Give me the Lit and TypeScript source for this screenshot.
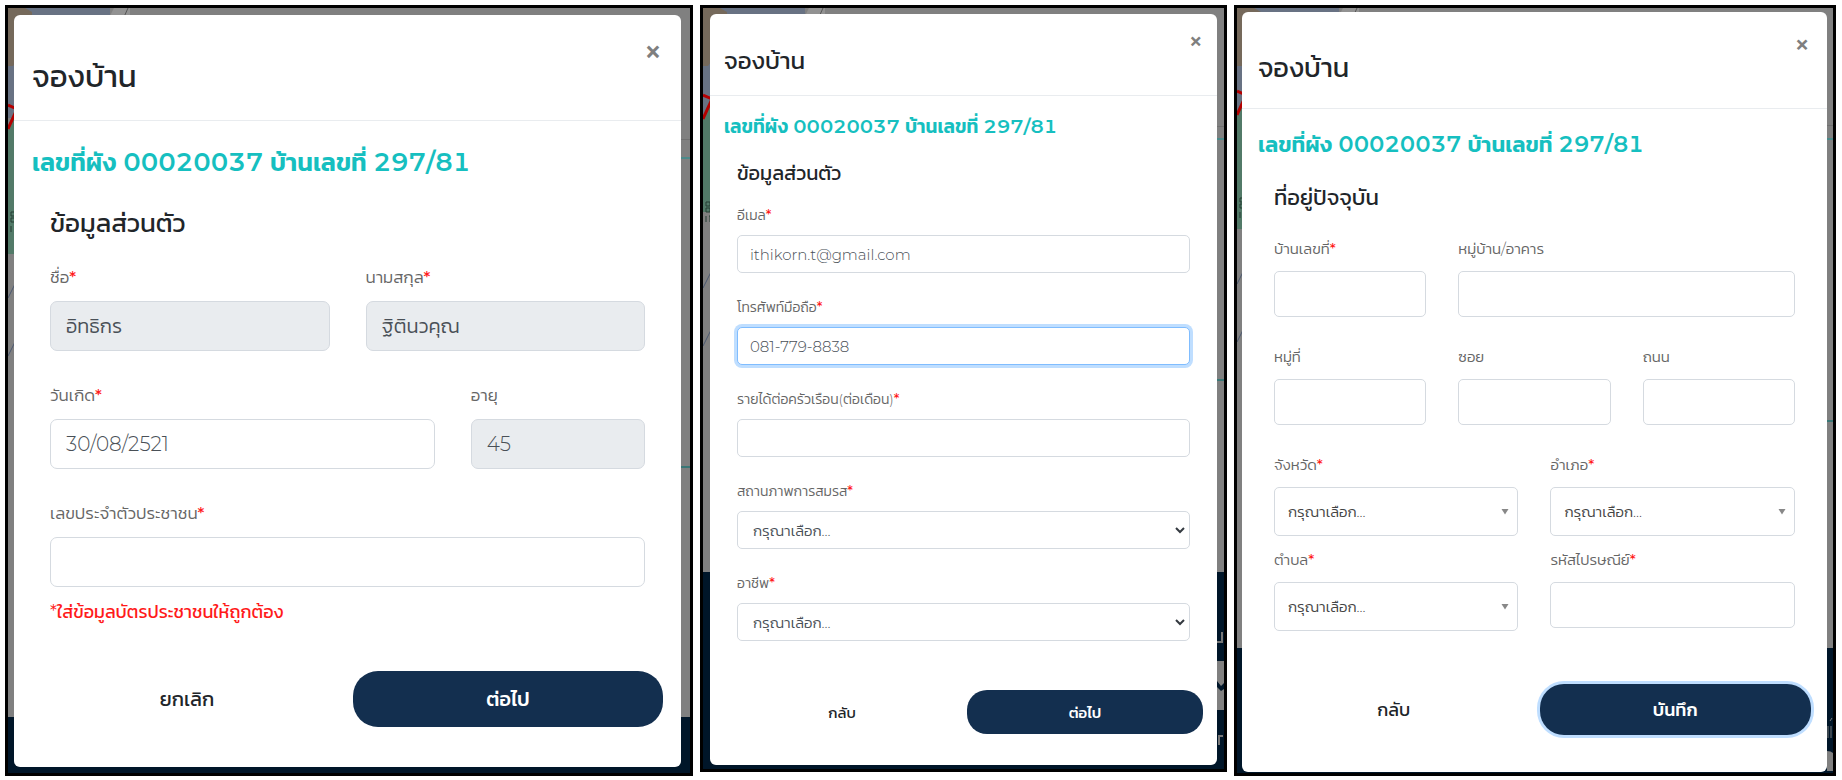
import { LitElement, html, css, svg, nothing } from "lit";
import { customElement, property } from "lit/decorators.js";

interface Field {
  id: string;
  label: string;
  span: number;
  kind?: "text" | "native" | "picker";
  value?: string;
  required?: boolean;
  disabled?: boolean;
  focused?: boolean;
  note?: string;
}

interface Step {
  size: "large" | "small" | "medium";
  heading: string;
  back: string;
  next: string;
  ring?: boolean;
  fields: Field[];
}

const CHOOSE = "กรุณาเลือก...";

const STEPS: Step[] = [
  {
    size: "large",
    heading: "ข้อมูลส่วนตัว",
    back: "ยกเลิก",
    next: "ต่อไป",
    fields: [
      { id: "first-name", label: "ชื่อ", span: 6, value: "อิทธิกร", required: true, disabled: true },
      { id: "last-name", label: "นามสกุล", span: 6, value: "ฐิตินวคุณ", required: true, disabled: true },
      { id: "birth", label: "วันเกิด", span: 8, value: "30/08/2521", required: true },
      { id: "age", label: "อายุ", span: 4, value: "45", disabled: true },
      { id: "citizen", label: "เลขประจำตัวประชาชน", span: 12, required: true, note: "*ใส่ข้อมูลบัตรประชาชนให้ถูกต้อง" },
    ],
  },
  {
    size: "small",
    heading: "ข้อมูลส่วนตัว",
    back: "กลับ",
    next: "ต่อไป",
    fields: [
      { id: "email", label: "อีเมล", span: 12, value: "ithikorn.t@gmail.com", required: true },
      { id: "phone", label: "โทรศัพท์มือถือ", span: 12, value: "081-779-8838", required: true, focused: true },
      { id: "income", label: "รายได้ต่อครัวเรือน(ต่อเดือน)", span: 12, required: true },
      { id: "marital", label: "สถานภาพการสมรส", span: 12, kind: "native", required: true },
      { id: "job", label: "อาชีพ", span: 12, kind: "native", required: true },
    ],
  },
  {
    size: "medium",
    heading: "ที่อยู่ปัจจุบัน",
    back: "กลับ",
    next: "บันทึก",
    ring: true,
    fields: [
      { id: "house-no", label: "บ้านเลขที่", span: 4, required: true },
      { id: "village", label: "หมู่บ้าน/อาคาร", span: 8 },
      { id: "moo", label: "หมู่ที่", span: 4 },
      { id: "soi", label: "ซอย", span: 4 },
      { id: "road", label: "ถนน", span: 4 },
      { id: "province", label: "จังหวัด", span: 6, kind: "picker", required: true },
      { id: "district", label: "อำเภอ", span: 6, kind: "picker", required: true },
      { id: "subdistrict", label: "ตำบล", span: 6, kind: "picker", required: true },
      { id: "postcode", label: "รหัสไปรษณีย์", span: 6, required: true },
    ],
  },
];

@customElement("booking-step")
export class BookingStep extends LitElement {
  @property({ attribute: false }) step!: Step;

  static styles = css`
    :host {
      display: block;
      min-width: 0;
    }
    * {
      box-sizing: border-box;
    }
    .frame {
      position: relative;
      border: 3px solid #000;
      background: #808080;
      overflow: hidden;
    }
    .large {
      padding: 7px 9px 6px 6px;
      --edge: 18px;
      --inset: 36px;
      --gap: 36px;
      --head: 106px;
      --head-top: 16px;
      --title: 31px;
      --teal: 25px;
      --teal-line: 40px;
      --teal-top: 21px;
      --heading: 26px;
      --heading-line: 36px;
      --heading-top: 23px;
      --heading-bottom: 24px;
      --label: 17px;
      --label-line: 24px;
      --label-bottom: 12px;
      --row: 32px;
      --control: 50px;
      --text: 20px;
      --pad: 15px;
      --radius: 7px;
      --actions-top: 45px;
      --button: 56px;
      --button-text: 20px;
      --actions-bottom: 40px;
      --actions-gap: 11px;
      --pill: 25px;
      --close: 28px;
      --close-top: 22px;
      --close-right: 20px;
      --footer: 56px;
    }
    .small {
      padding: 6px 7px 4px;
      --edge: 14px;
      --inset: 27px;
      --gap: 30px;
      --head: 82px;
      --head-top: 12px;
      --title: 24px;
      --teal: 19px;
      --teal-line: 30px;
      --teal-top: 16px;
      --heading: 20px;
      --heading-line: 28px;
      --heading-top: 17px;
      --heading-bottom: 19px;
      --label: 14px;
      --label-line: 18px;
      --label-bottom: 11px;
      --row: 25px;
      --control: 38px;
      --text: 15px;
      --pad: 12px;
      --radius: 5px;
      --actions-top: 49px;
      --button: 44px;
      --button-text: 15px;
      --actions-bottom: 31px;
      --actions-gap: 7px;
      --pill: 20px;
      --close: 22px;
      --close-top: 15px;
      --close-right: 15px;
      --footer: 197px;
    }
    .medium {
      padding: 4px 6px 1px 5px;
      --edge: 16px;
      --inset: 32px;
      --gap: 32px;
      --head: 97px;
      --head-top: 14px;
      --title: 27px;
      --teal: 22px;
      --teal-line: 34px;
      --teal-top: 19px;
      --heading: 22px;
      --heading-line: 32px;
      --heading-top: 20px;
      --heading-bottom: 24px;
      --label: 15px;
      --label-line: 22px;
      --label-bottom: 11px;
      --row: 29px;
      --control: 46px;
      --text: 15px;
      --pad: 13px;
      --radius: 5px;
      --actions-top: 56px;
      --button: 51px;
      --button-text: 18px;
      --actions-bottom: 37px;
      --actions-gap: 10px;
      --pill: 24px;
      --close: 24px;
      --close-top: 20px;
      --close-right: 18px;
      --footer: 125px;
    }
    .footer {
      position: absolute;
      left: 0;
      right: 0;
      bottom: 0;
      height: var(--footer);
      background: #001629;
    }
    .map {
      position: absolute;
      top: 0;
    }
    .map.start {
      left: 0;
    }
    .map.end {
      right: 0;
    }
    .modal {
      position: relative;
      background: #fff;
      border-radius: 6px;
    }
    .head {
      display: flex;
      align-items: center;
      height: var(--head);
      padding: var(--head-top) var(--edge) 0;
      border-bottom: 1px solid #e9ecef;
    }
    h1,
    h2,
    h3 {
      margin: 0;
      font-weight: 400;
    }
    h1 {
      font-size: var(--title);
      color: #212529;
    }
    .close {
      position: absolute;
      top: var(--close-top);
      right: var(--close-right);
      padding: 0;
      border: 0;
      background: none;
      font: 700 var(--close) / 1 "Open Sans", sans-serif;
      color: #7f7f7f;
    }
    h2 {
      margin-top: var(--teal-top);
      padding: 0 var(--edge);
      font-size: var(--teal);
      line-height: var(--teal-line);
      font-weight: 600;
      font-variant-numeric: tabular-nums;
      color: #16bfc0;
      white-space: nowrap;
    }
    h3 {
      margin: var(--heading-top) 0 var(--heading-bottom);
      padding: 0 var(--inset);
      font-size: var(--heading);
      line-height: var(--heading-line);
      color: #212529;
    }
    .fields {
      display: grid;
      grid-template-columns: repeat(12, minmax(0, 1fr));
      column-gap: var(--gap);
      row-gap: var(--row);
      padding: 0 var(--inset);
    }
    .span-4 {
      grid-column: span 4;
    }
    .span-6 {
      grid-column: span 6;
    }
    .span-8 {
      grid-column: span 8;
    }
    .span-12 {
      grid-column: span 12;
    }
    label {
      display: block;
      margin-bottom: var(--label-bottom);
      font-size: var(--label);
      font-weight: 300;
      line-height: var(--label-line);
      color: #666;
      white-space: nowrap;
    }
    .required,
    .note {
      color: #ff1a1a;
    }
    .required {
      font-weight: 500;
    }
    .box {
      position: relative;
    }
    input,
    select {
      display: block;
      width: 100%;
      height: var(--control);
      padding: 0 var(--pad);
      border: 1px solid #d5dae0;
      border-radius: var(--radius);
      background: #fff;
      font-family: inherit;
      font-size: var(--text);
      font-weight: 300;
      color: #495057;
      outline: 0;
      appearance: none;
    }
    input:disabled {
      background: #e9ecef;
      opacity: 1;
    }
    .focused {
      border-color: #80bdff;
      box-shadow: 0 0 0 3px #bfdeff;
    }
    .native select {
      padding-left: 15px;
    }
    .picker select {
      height: 49px;
      color: #444;
    }
    .picker {
      margin-bottom: -16px;
    }
    .arrow {
      position: absolute;
      top: 0;
      height: 100%;
      pointer-events: none;
    }
    .native .arrow {
      right: 5px;
    }
    .picker .arrow {
      right: 9px;
    }
    .note {
      margin: 11px 0 0;
      font-size: 18px;
      line-height: 28px;
    }
    .actions {
      display: grid;
      grid-template-columns: 1fr 1fr;
      gap: var(--actions-gap);
      padding: var(--actions-top) var(--edge) var(--actions-bottom);
    }
    .action {
      height: var(--button);
      border: 0;
      border-radius: var(--pill);
      background: none;
      font-family: inherit;
      font-size: var(--button-text);
      color: #212529;
    }
    .primary {
      background: #132f4f;
      color: #fff;
      font-weight: 500;
    }
    .ring {
      box-shadow: 0 0 0 3px #bfdeff;
    }
  `;

  private arrow(kind: string) {
    return kind === "native"
      ? html`<svg class="arrow" width="10" viewBox="0 0 10 10" aria-hidden="true">
          <path d="M1 3l4 4 4-4" fill="none" stroke="#343a40" stroke-width="2" />
        </svg>`
      : html`<svg class="arrow" width="8" viewBox="0 0 8 8" aria-hidden="true">
          <path d="M0.5 1.5h7L4 7z" fill="#888" />
        </svg>`;
  }

  private field(f: Field) {
    const kind = f.kind ?? "text";
    return html`<div class="span-${f.span} ${kind}">
      <label for=${f.id}>${f.label}${f.required ? html`<span class="required">*</span>` : nothing}</label>
      <div class="box">
        ${kind === "text"
          ? html`<input id=${f.id} type="text" class=${f.focused ? "focused" : ""} .value=${f.value ?? ""} ?disabled=${f.disabled} />`
          : html`<select id=${f.id}><option>${CHOOSE}</option></select>${this.arrow(kind)}`}
      </div>
      ${f.note ? html`<p class="note">${f.note}</p>` : nothing}
    </div>`;
  }

  private mapStart() {
    const large = this.step.size === "large";
    const shift = large ? 0 : this.step.size === "small" ? -10 : -14;
    const green = large ? 246 : this.step.size === "small" ? 204 : 221;
    return html`<svg class="map start" width="122" height="360" aria-hidden="true">
      <rect width="102" height="120" fill="#687283" />
      <path d="M0 0H17L24 4V8L8 20V54L5 58H0z" fill="#75695b" />
      <path d="M106 0h16v8H102z" fill="#929292" />
      <path d="M120 0l-4 9" stroke="#555" />
      <path d="M0 110h9v250H0z" fill="#808080" />
      <g transform="translate(0 ${shift})">
        <path d="M0 118L8 99V${green - shift}H0z" fill="#527a68" />
        <path d="M0 97l9 4L0 121" fill="none" stroke="#b50000" stroke-width="3" />
        <path d="M0 290l9-18M0 348l9-18" stroke="#4b5870" />
        ${svg`<path d="M3 204h4v4h-4zM3 210h4v4h-4zM3 218v6M6 218h1v6" fill="none" stroke="#243c32" />`}
      </g>
    </svg>`;
  }

  private mapEnd() {
    const lines = { large: [131, 149, 458], small: [118, 130, 371], medium: [117, 130, 412] }[this.step.size];
    return html`<svg class="map end" width="10" height="480" aria-hidden="true">
      <rect y=${lines[0]} width="10" height="1" fill="#707070" />
      <rect y=${lines[1]} width="10" height="2" fill="#4b8a8a" />
      <rect y=${lines[2]} width="10" height="2" fill="#3a7776" />
    </svg>`;
  }

  private banner() {
    if (this.step.size === "large") return nothing;
    return this.step.size === "small"
      ? html`<svg class="map end" width="7" height="762" aria-hidden="true">
          <rect y="653" width="7" height="49" fill="#808080" />
          <path d="M0 673l4 5 3-3v6l-3 2-4-4z" fill="#001629" />
          <path d="M0 634h5v-10M2 737v-9h4" fill="none" stroke="#777" stroke-width="2" />
        </svg>`
      : html`<svg class="map end" width="6" height="763" aria-hidden="true">
          <path d="M0 743q4 0 6 2v18H0z" fill="#808080" />
          <path d="M1 718v12M4 718v12M3 713l2-3" fill="none" stroke="#777" />
        </svg>`;
  }

  render() {
    const s = this.step;
    return html`<section class="frame ${s.size}">
      ${this.mapStart()}${this.mapEnd()}
      <div class="footer"></div>
      ${this.banner()}
      <div class="modal" role="dialog" aria-label="จองบ้าน">
        <header class="head"><h1>จองบ้าน</h1></header>
        <button class="close" type="button">×</button>
        <h2>เลขที่ผัง 00020037 บ้านเลขที่ 297/81</h2>
        <h3>${s.heading}</h3>
        <div class="fields">${s.fields.map((f) => this.field(f))}</div>
        <div class="actions">
          <button class="action" type="button">${s.back}</button>
          <button class="action primary ${s.ring ? "ring" : ""}" type="button">${s.next}</button>
        </div>
      </div>
    </section>`;
  }
}

@customElement("app-root")
export class AppRoot extends LitElement {
  static styles = css`
    :host {
      display: block;
      background: #fff;
      font-family: Montserrat, Kanit, Prompt, "Noto Sans Thai", "Noto Sans", sans-serif;
    }
    .steps {
      display: grid;
      grid-template-columns: 688fr 527fr 602fr;
      align-items: start;
      gap: 7px;
      padding: 5px 6px 4px 5px;
    }
  `;

  render() {
    return html`<main class="steps">${STEPS.map((s) => html`<booking-step .step=${s}></booking-step>`)}</main>`;
  }
}
